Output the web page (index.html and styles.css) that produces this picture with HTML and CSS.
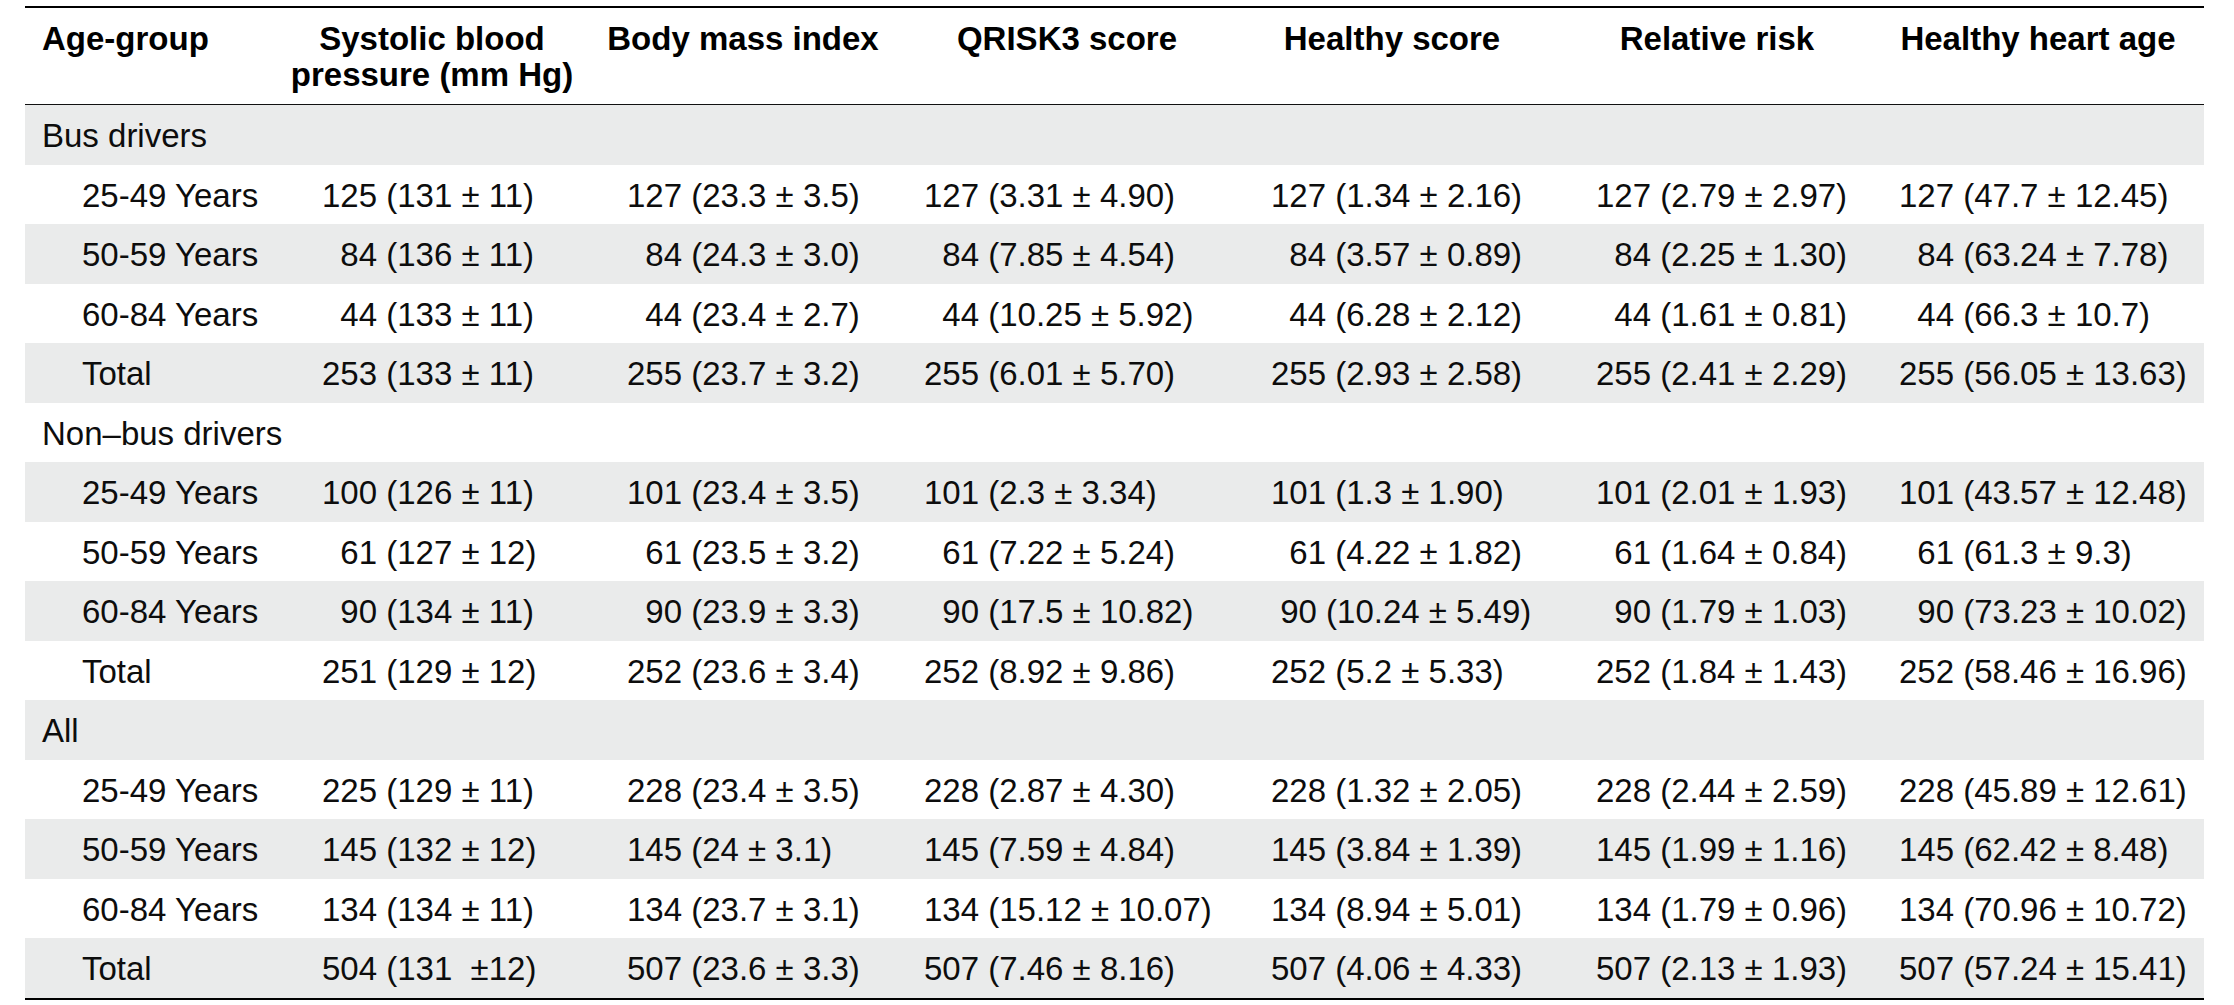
FILE: index.html
```html
<!DOCTYPE html>
<html lang="en">
<head>
<meta charset="utf-8">
<title>Age-group table</title>
<link rel="stylesheet" href="styles.css">
</head>
<body>
<table class="stats">
  <colgroup>
    <col class="w1"><col class="w2"><col class="w3"><col class="w4"><col class="w5"><col class="w6"><col class="w7">
  </colgroup>
  <thead>
    <tr>
      <th class="first">Age-group</th>
      <th>Systolic blood<br>pressure (mm Hg)</th>
      <th>Body mass index</th>
      <th>QRISK3 score</th>
      <th>Healthy score</th>
      <th>Relative risk</th>
      <th>Healthy heart age</th>
    </tr>
  </thead>
  <tbody>
    <tr class="group"><td colspan="7">Bus drivers</td></tr>
    <tr><td>25-49 Years</td><td>125 (131 ± 11)</td><td>127 (23.3 ± 3.5)</td><td>127 (3.31 ± 4.90)</td><td>127 (1.34 ± 2.16)</td><td>127 (2.79 ± 2.97)</td><td>127 (47.7 ± 12.45)</td></tr>
    <tr><td>50-59 Years</td><td>&#8199;84 (136 ± 11)</td><td>&#8199;84 (24.3 ± 3.0)</td><td>&#8199;84 (7.85 ± 4.54)</td><td>&#8199;84 (3.57 ± 0.89)</td><td>&#8199;84 (2.25 ± 1.30)</td><td>&#8199;84 (63.24 ± 7.78)</td></tr>
    <tr><td>60-84 Years</td><td>&#8199;44 (133 ± 11)</td><td>&#8199;44 (23.4 ± 2.7)</td><td>&#8199;44 (10.25 ± 5.92)</td><td>&#8199;44 (6.28 ± 2.12)</td><td>&#8199;44 (1.61 ± 0.81)</td><td>&#8199;44 (66.3 ± 10.7)</td></tr>
    <tr><td>Total</td><td>253 (133 ± 11)</td><td>255 (23.7 ± 3.2)</td><td>255 (6.01 ± 5.70)</td><td>255 (2.93 ± 2.58)</td><td>255 (2.41 ± 2.29)</td><td>255 (56.05 ± 13.63)</td></tr>
    <tr class="group"><td colspan="7">Non–bus drivers</td></tr>
    <tr><td>25-49 Years</td><td>100 (126 ± 11)</td><td>101 (23.4 ± 3.5)</td><td>101 (2.3 ± 3.34)</td><td>101 (1.3 ± 1.90)</td><td>101 (2.01 ± 1.93)</td><td>101 (43.57 ± 12.48)</td></tr>
    <tr><td>50-59 Years</td><td>&#8199;61 (127 ± 12)</td><td>&#8199;61 (23.5 ± 3.2)</td><td>&#8199;61 (7.22 ± 5.24)</td><td>&#8199;61 (4.22 ± 1.82)</td><td>&#8199;61 (1.64 ± 0.84)</td><td>&#8199;61 (61.3 ± 9.3)</td></tr>
    <tr><td>60-84 Years</td><td>&#8199;90 (134 ± 11)</td><td>&#8199;90 (23.9 ± 3.3)</td><td>&#8199;90 (17.5 ± 10.82)</td><td>&nbsp;90 (10.24 ± 5.49)</td><td>&#8199;90 (1.79 ± 1.03)</td><td>&#8199;90 (73.23 ± 10.02)</td></tr>
    <tr><td>Total</td><td>251 (129 ± 12)</td><td>252 (23.6 ± 3.4)</td><td>252 (8.92 ± 9.86)</td><td>252 (5.2 ± 5.33)</td><td>252 (1.84 ± 1.43)</td><td>252 (58.46 ± 16.96)</td></tr>
    <tr class="group"><td colspan="7">All</td></tr>
    <tr><td>25-49 Years</td><td>225 (129 ± 11)</td><td>228 (23.4 ± 3.5)</td><td>228 (2.87 ± 4.30)</td><td>228 (1.32 ± 2.05)</td><td>228 (2.44 ± 2.59)</td><td>228 (45.89 ± 12.61)</td></tr>
    <tr><td>50-59 Years</td><td>145 (132 ± 12)</td><td>145 (24 ± 3.1)</td><td>145 (7.59 ± 4.84)</td><td>145 (3.84 ± 1.39)</td><td>145 (1.99 ± 1.16)</td><td>145 (62.42 ± 8.48)</td></tr>
    <tr><td>60-84 Years</td><td>134 (134 ± 11)</td><td>134 (23.7 ± 3.1)</td><td>134 (15.12 ± 10.07)</td><td>134 (8.94 ± 5.01)</td><td>134 (1.79 ± 0.96)</td><td>134 (70.96 ± 10.72)</td></tr>
    <tr><td>Total</td><td>504 (131&nbsp; ±12)</td><td>507 (23.6 ± 3.3)</td><td>507 (7.46 ± 8.16)</td><td>507 (4.06 ± 4.33)</td><td>507 (2.13 ± 1.93)</td><td>507 (57.24 ± 15.41)</td></tr>
  </tbody>
</table>
</body>
</html>
```

FILE: styles.css
```css
html, body {
  margin: 0;
  padding: 0;
  background: #ffffff;
}

body {
  padding: 6px 30px 0 25px;
  font-family: "Liberation Sans", Arial, Helvetica, sans-serif;
  color: #0d0d0d;
}

.stats {
  width: 2179px;
  table-layout: fixed;
  border-collapse: separate;
  border-spacing: 0;
  border-top: 2px solid #000;
  border-bottom: 2px solid #000;
  font-size: 33px;
}

.w1 { width: 265px; }
.w2 { width: 284px; }
.w3 { width: 338px; }
.w4 { width: 310px; }
.w5 { width: 340px; }
.w6 { width: 310px; }
.w7 { width: 332px; }

.stats th {
  font-weight: bold;
  color: #000;
  line-height: 36px;
  padding: 13px 0 11px 0;
  text-align: center;
  vertical-align: top;
  border-bottom: 1px solid #111;
  white-space: nowrap;
}

.stats th.first {
  text-align: left;
  padding-left: 17px;
}

.stats td {
  height: 59.53px;
  box-sizing: border-box;
  padding: 3px 0 0 0;
  line-height: 36px;
  vertical-align: middle;
  white-space: nowrap;
  text-align: left;
}

.stats tbody tr:nth-child(odd) td {
  background: #eaebeb;
}

.stats td:nth-child(1) { padding-left: 57px; }
.stats td:nth-child(2) { padding-left: 32px; }
.stats td:nth-child(3) { padding-left: 53px; }
.stats td:nth-child(4) { padding-left: 12px; }
.stats td:nth-child(5) { padding-left: 49px; }
.stats td:nth-child(6) { padding-left: 34px; }
.stats td:nth-child(7) { padding-left: 27px; }

.stats tr.group td {
  padding-left: 17px;
}
```
